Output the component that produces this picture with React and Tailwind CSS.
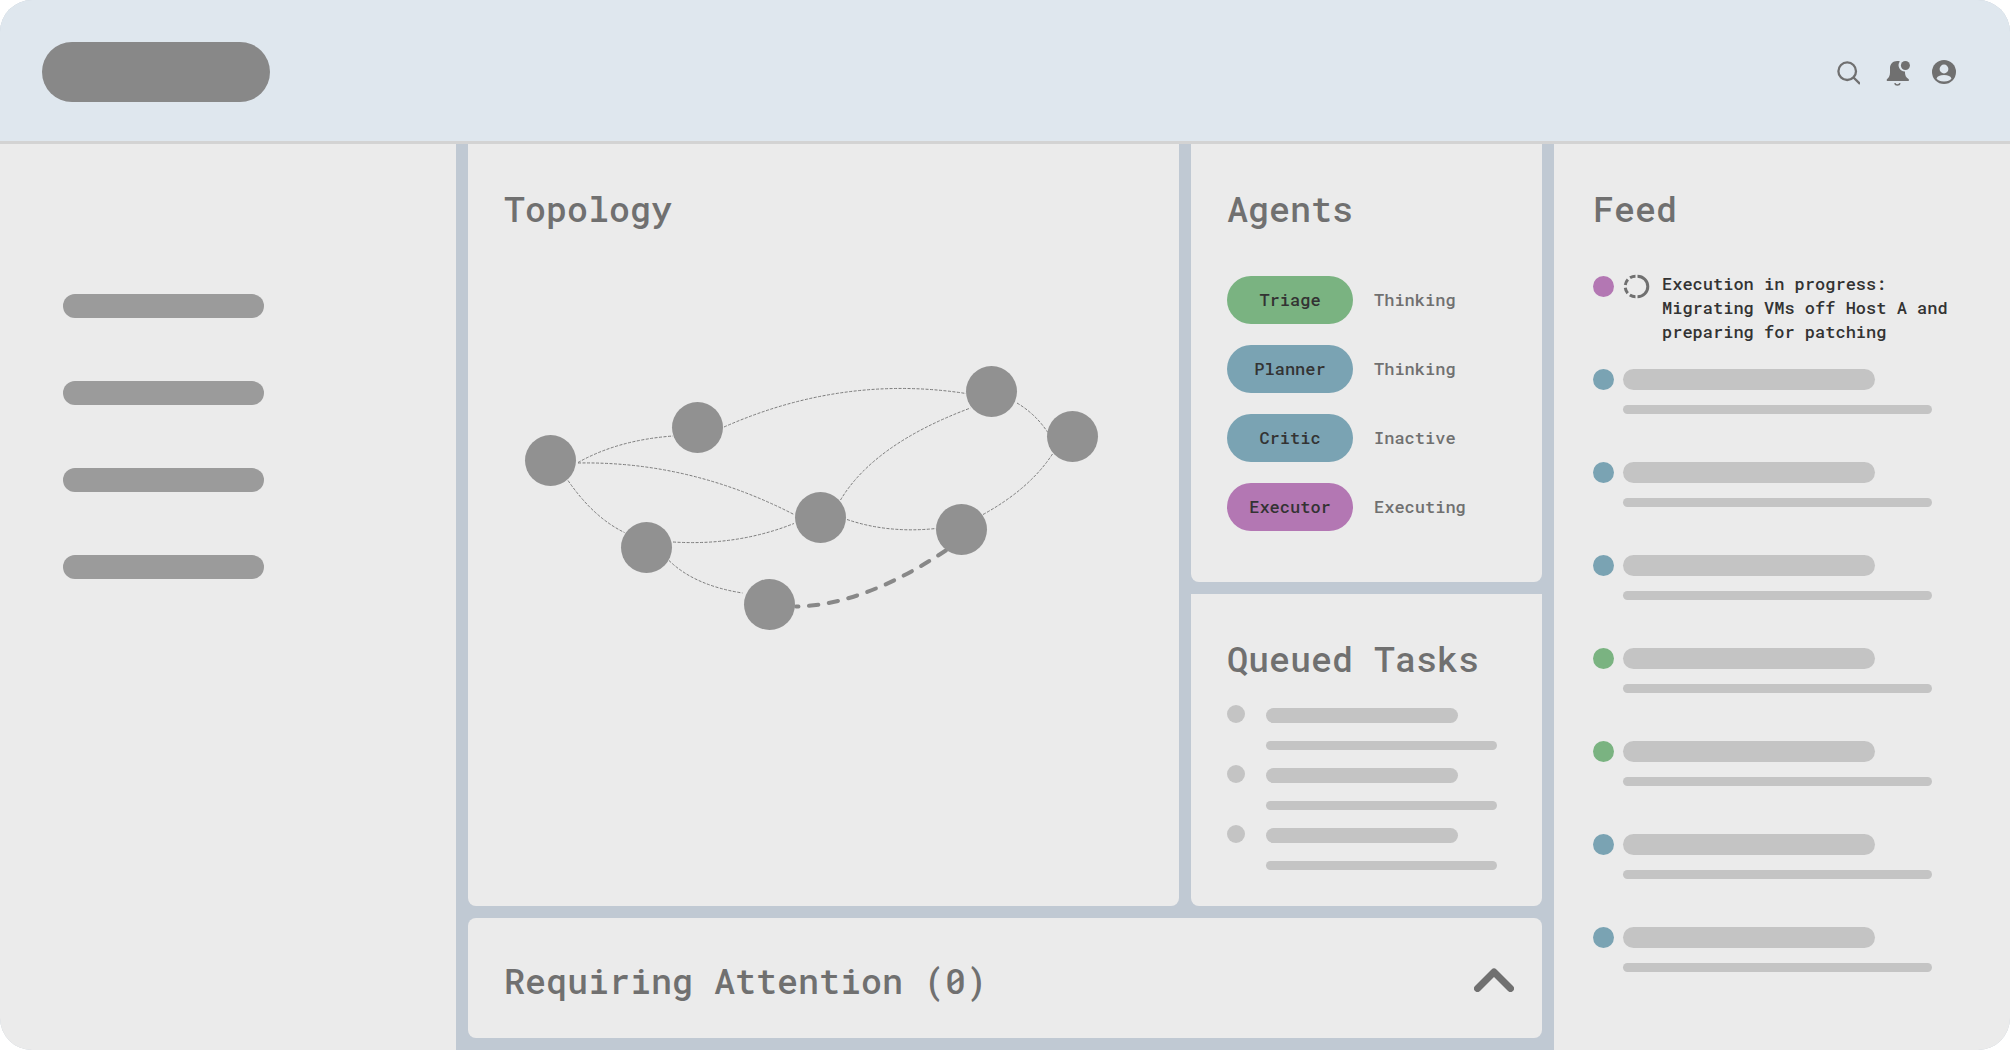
const pillColors = {
  green: "bg-[#7ab381]",
  blue: "bg-[#7aa3b3]",
  purple: "bg-[#b377b3]",
};

const agents = [
  { name: "Triage", status: "Thinking", color: "green" },
  { name: "Planner", status: "Thinking", color: "blue" },
  { name: "Critic", status: "Inactive", color: "blue" },
  { name: "Executor", status: "Executing", color: "purple" },
];

const feed = ["blue", "blue", "blue", "green", "green", "blue", "blue"];

const nodes = [
  [46.5, 100.5],
  [193.5, 67.5],
  [487.5, 31.5],
  [568.5, 76.5],
  [316.5, 157.5],
  [457.5, 169.5],
  [142.5, 187.5],
  [265.5, 244.5],
];

const links = [
  "M74 102.5Q114 80 169 76",
  "M220 67Q339 14.5 462 33.5",
  "M74 103Q186 101 290 154.5",
  "M64 120.5Q89.5 157.5 120.5 172.5",
  "M169 182Q233.5 186 290 163.5",
  "M165 200.5Q190.5 225.5 238.5 233",
  "M336.5 140Q370 84 466.5 48",
  "M513 43Q531.5 54 543.5 72",
  "M343 159.5Q384 173.5 432 168.5",
  "M479 154.5Q525.5 129 548.5 94",
];

function Heading({ children }) {
  return (
    <h2 className="text-[35px] leading-[42px] font-medium text-[#707070]">
      {children}
    </h2>
  );
}

function Header() {
  return (
    <header className="flex items-center justify-between border-b-3 border-[#d3d3d3] bg-[#dfe7ee] pt-[42px] pb-[39px] pl-[42px] pr-[54px] text-[#707070]">
      <div className="h-[60px] w-[228px] rounded-full bg-[#888888]" />

      <div className="flex items-center gap-[22px]">
        <button type="button" aria-label="Search">
          <svg width="24" height="28" viewBox="0 0 24 28" fill="none">
            <g stroke="currentColor" strokeWidth="2.3">
              <circle cx="11.2" cy="13.2" r="8.8" />
              <path d="M17.5 19.5L24 26" />
            </g>
          </svg>
        </button>

        <button type="button" aria-label="Notifications">
          <svg width="28" height="28" viewBox="0 0 28 28">
            <path
              d="M4.800 23v-1.800c2.300-1.600 3.200-3.800 3.200-7V10c0-4.200 3-7 7.200-7 1 0 1.900.1 2.700.4a6.200 6.200 0 0 0 5 10c.1 3.800.9 6 3.900 7.800V23z"
              fill="currentColor"
            />
            <circle cx="23.400" cy="7.500" r="4.500" fill="currentColor" />
            <path
              d="M12.800 25.200c.8 2.400 4.400 2.400 5.200 0"
              fill="none"
              stroke="currentColor"
              strokeWidth="1.700"
            />
          </svg>
        </button>

        <button type="button" aria-label="Account">
          <svg width="24" height="28" viewBox="0 0 24 28">
            <circle cx="12" cy="14" r="12" fill="currentColor" />
            <circle cx="12" cy="11" r="4.400" fill="#dfe7ee" />
            <ellipse cx="12" cy="20.200" rx="7.200" ry="3.200" fill="#dfe7ee" />
          </svg>
        </button>
      </div>
    </header>
  );
}

function Sidebar() {
  return (
    <nav className="flex w-[456px] shrink-0 flex-col gap-[63px] bg-[#ebebeb] pt-[150px] pl-[63px]">
      {[0, 1, 2, 3].map((i) => (
        <div key={i} className="h-6 w-[201px] rounded-full bg-[#9b9b9b]" />
      ))}
    </nav>
  );
}

function Topology() {
  return (
    <section className="flex-1 rounded-b-lg bg-[#ebebeb] px-9 pt-[43px]">
      <Heading>Topology</Heading>

      <svg
        className="mt-[131px]"
        width="600"
        height="280"
        viewBox="0 0 600 280"
        fill="none"
      >
        <g stroke="#7c7c7c" strokeWidth="1" strokeDasharray="3 1.500">
          {links.map((d) => (
            <path key={d} d={d} />
          ))}
        </g>

        <path
          d="M292 246.500Q359.500 245.500 442.500 190"
          stroke="#888888"
          strokeWidth="4"
          strokeLinecap="round"
          strokeDasharray="9.500 10.500"
          strokeDashoffset="7"
        />

        {nodes.map(([x, y]) => (
          <circle key={x} cx={x} cy={y} r="25.500" fill="#919191" />
        ))}
      </svg>
    </section>
  );
}

function Agents() {
  return (
    <section className="h-[438px] rounded-b-lg bg-[#ebebeb] px-9 pt-[43px]">
      <Heading>Agents</Heading>

      <ul className="mt-[47px] flex flex-col gap-[21px] text-[17px] leading-6 font-medium">
        {agents.map((agent) => (
          <li key={agent.name} className="flex items-center gap-[21px]">
            <span
              className={
                "flex h-12 w-[126px] items-center justify-center rounded-full text-[#333333] " +
                pillColors[agent.color]
              }
            >
              {agent.name}
            </span>
            <span className="text-[#707070]">{agent.status}</span>
          </li>
        ))}
      </ul>
    </section>
  );
}

function QueuedTasks() {
  return (
    <section className="flex-1 rounded-b-lg bg-[#ebebeb] px-9 pt-[43px]">
      <Heading>Queued Tasks</Heading>

      <div className="mt-[26px] flex flex-col gap-[15px]">
        {[0, 1, 2].map((i) => (
          <div key={i} className="flex gap-[21px]">
            <div className="size-[18px] rounded-full bg-[#c4c4c4]" />
            <div className="flex flex-col gap-[18px] pt-[3px]">
              <div className="h-[15px] w-[192px] rounded-full bg-[#c4c4c4]" />
              <div className="h-[9px] w-[231px] rounded-full bg-[#c4c4c4]" />
            </div>
          </div>
        ))}
      </div>
    </section>
  );
}

function Attention() {
  return (
    <section className="flex h-[120px] items-center justify-between rounded-lg bg-[#ebebeb] pt-1 pl-9 pr-7">
      <Heading>Requiring Attention (0)</Heading>

      <button type="button" aria-label="Expand" className="text-[#707070]">
        <svg width="40" height="24" viewBox="0 0 40 24" fill="none">
          <path
            d="M3.500 20.500L20 4l16.500 16.500"
            stroke="currentColor"
            strokeWidth="7"
            strokeLinecap="round"
            strokeLinejoin="round"
          />
        </svg>
      </button>
    </section>
  );
}

function Feed() {
  return (
    <aside className="w-[456px] shrink-0 bg-[#ebebeb] pt-[43px] pl-[39px]">
      <Heading>Feed</Heading>

      <div className="mt-[43px] flex h-[97px] items-start">
        <div className="mt-1 size-[21px] rounded-full bg-[#b377b3]" />
        <svg
          className="mt-1 ml-[9px]"
          width="27"
          height="21"
          viewBox="0 0 27 21"
          overflow="visible"
          fill="none"
          stroke="#707070"
          strokeWidth="3"
        >
          <path d="M14.500 0.200a10.300 10.300 0 0 1 0 20.600" />
          <path
            d="M12.500 20.800a10.300 10.300 0 0 1 0-20.600"
            strokeDasharray="6 2.800"
          />
        </svg>
        <p className="ml-3 text-[17px] leading-6 font-medium text-[#333333]">
          Execution in progress:
          <br />
          Migrating VMs off Host A and
          <br />
          preparing for patching
        </p>
      </div>

      <div className="flex flex-col gap-12">
        {feed.map((color, i) => (
          <div key={i} className="flex gap-[9px]">
            <div className={"size-[21px] rounded-full " + pillColors[color]} />
            <div className="flex flex-col gap-[15px]">
              <div className="h-[21px] w-[252px] rounded-full bg-[#c4c4c4]" />
              <div className="h-[9px] w-[309px] rounded-full bg-[#c4c4c4]" />
            </div>
          </div>
        ))}
      </div>
    </aside>
  );
}

export default function App() {
  return (
    <div className="flex min-h-screen flex-col overflow-hidden rounded-4xl bg-[#c0c9d3] font-['Roboto_Mono','DejaVu_Sans_Mono',monospace]">
      <Header />

      <div className="flex flex-1">
        <Sidebar />

        <main className="flex flex-1 flex-col gap-3 px-3 pb-3">
          <div className="flex flex-1 gap-3">
            <Topology />
            <div className="flex w-[351px] flex-col gap-3">
              <Agents />
              <QueuedTasks />
            </div>
          </div>

          <Attention />
        </main>

        <Feed />
      </div>
    </div>
  );
}
